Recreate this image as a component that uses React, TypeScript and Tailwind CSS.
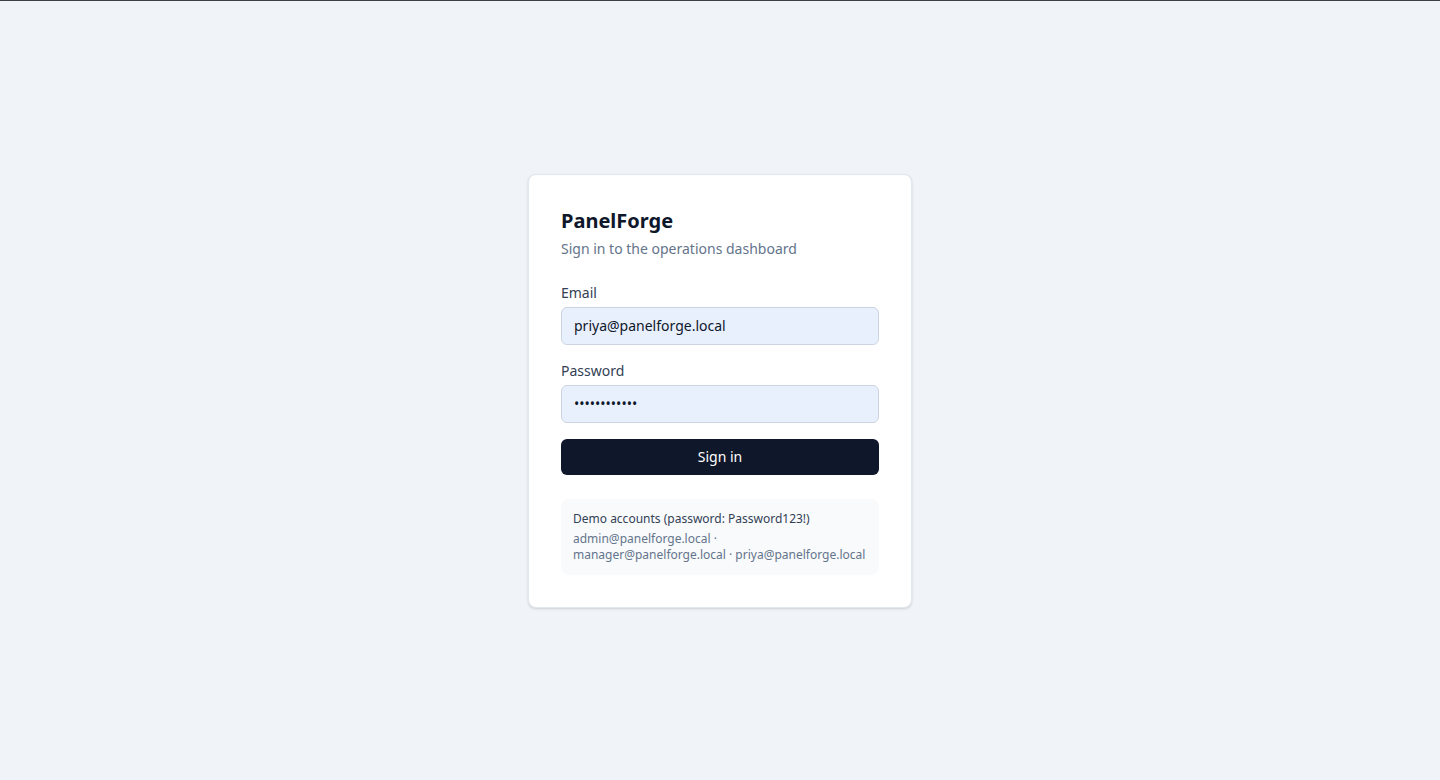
export default function App() {
  return (
    <div className="min-h-screen flex flex-col bg-[#f0f4f8] font-['Noto_Sans',sans-serif]">
      <div className="h-px bg-[#3b4046]" />
      <div className="flex-1 flex items-center justify-center">
        <div className="w-96 rounded-lg border border-[#e2e8f0] bg-white p-8 shadow-[0_1px_3px_rgba(15,23,42,0.1),0_1px_2px_rgba(15,23,42,0.06)]">
          <h1 className="text-xl leading-7 font-bold text-[#0f172a]">PanelForge</h1>
          <p className="mt-1 text-sm leading-5 text-[#64748b]">Sign in to the operations dashboard</p>

          <form className="mt-6 flex flex-col gap-4" onSubmit={(e) => e.preventDefault()}>
            <label className="flex flex-col">
              <span className="mb-1 text-sm leading-5 text-[#334155]">Email</span>
              <input
                type="email"
                readOnly
                defaultValue="priya@panelforge.local"
                className="h-[38px] rounded-md border border-[#cbd5e1] bg-[#e8f0fe] px-3 text-sm text-[#0f172a] outline-none"
              />
            </label>
            <label className="flex flex-col">
              <span className="mb-1 text-sm leading-5 text-[#334155]">Password</span>
              <input
                type="password"
                readOnly
                defaultValue="Password123!"
                className="h-[38px] rounded-md border border-[#cbd5e1] bg-[#e8f0fe] px-3 text-sm text-[#0f172a] outline-none"
              />
            </label>
            <button
              type="submit"
              className="h-9 rounded-md bg-[#0f172a] text-sm text-white"
            >
              Sign in
            </button>
          </form>

          <div className="mt-6 rounded-lg bg-[#f8fafc] p-3 text-xs leading-4">
            <p className="text-[#334155]">Demo accounts (password: Password123!)</p>
            <p className="mt-1 text-[#64748b]">
              admin@panelforge.local · manager@panelforge.local · priya@panelforge.local
            </p>
          </div>
        </div>
      </div>
    </div>
  );
}
